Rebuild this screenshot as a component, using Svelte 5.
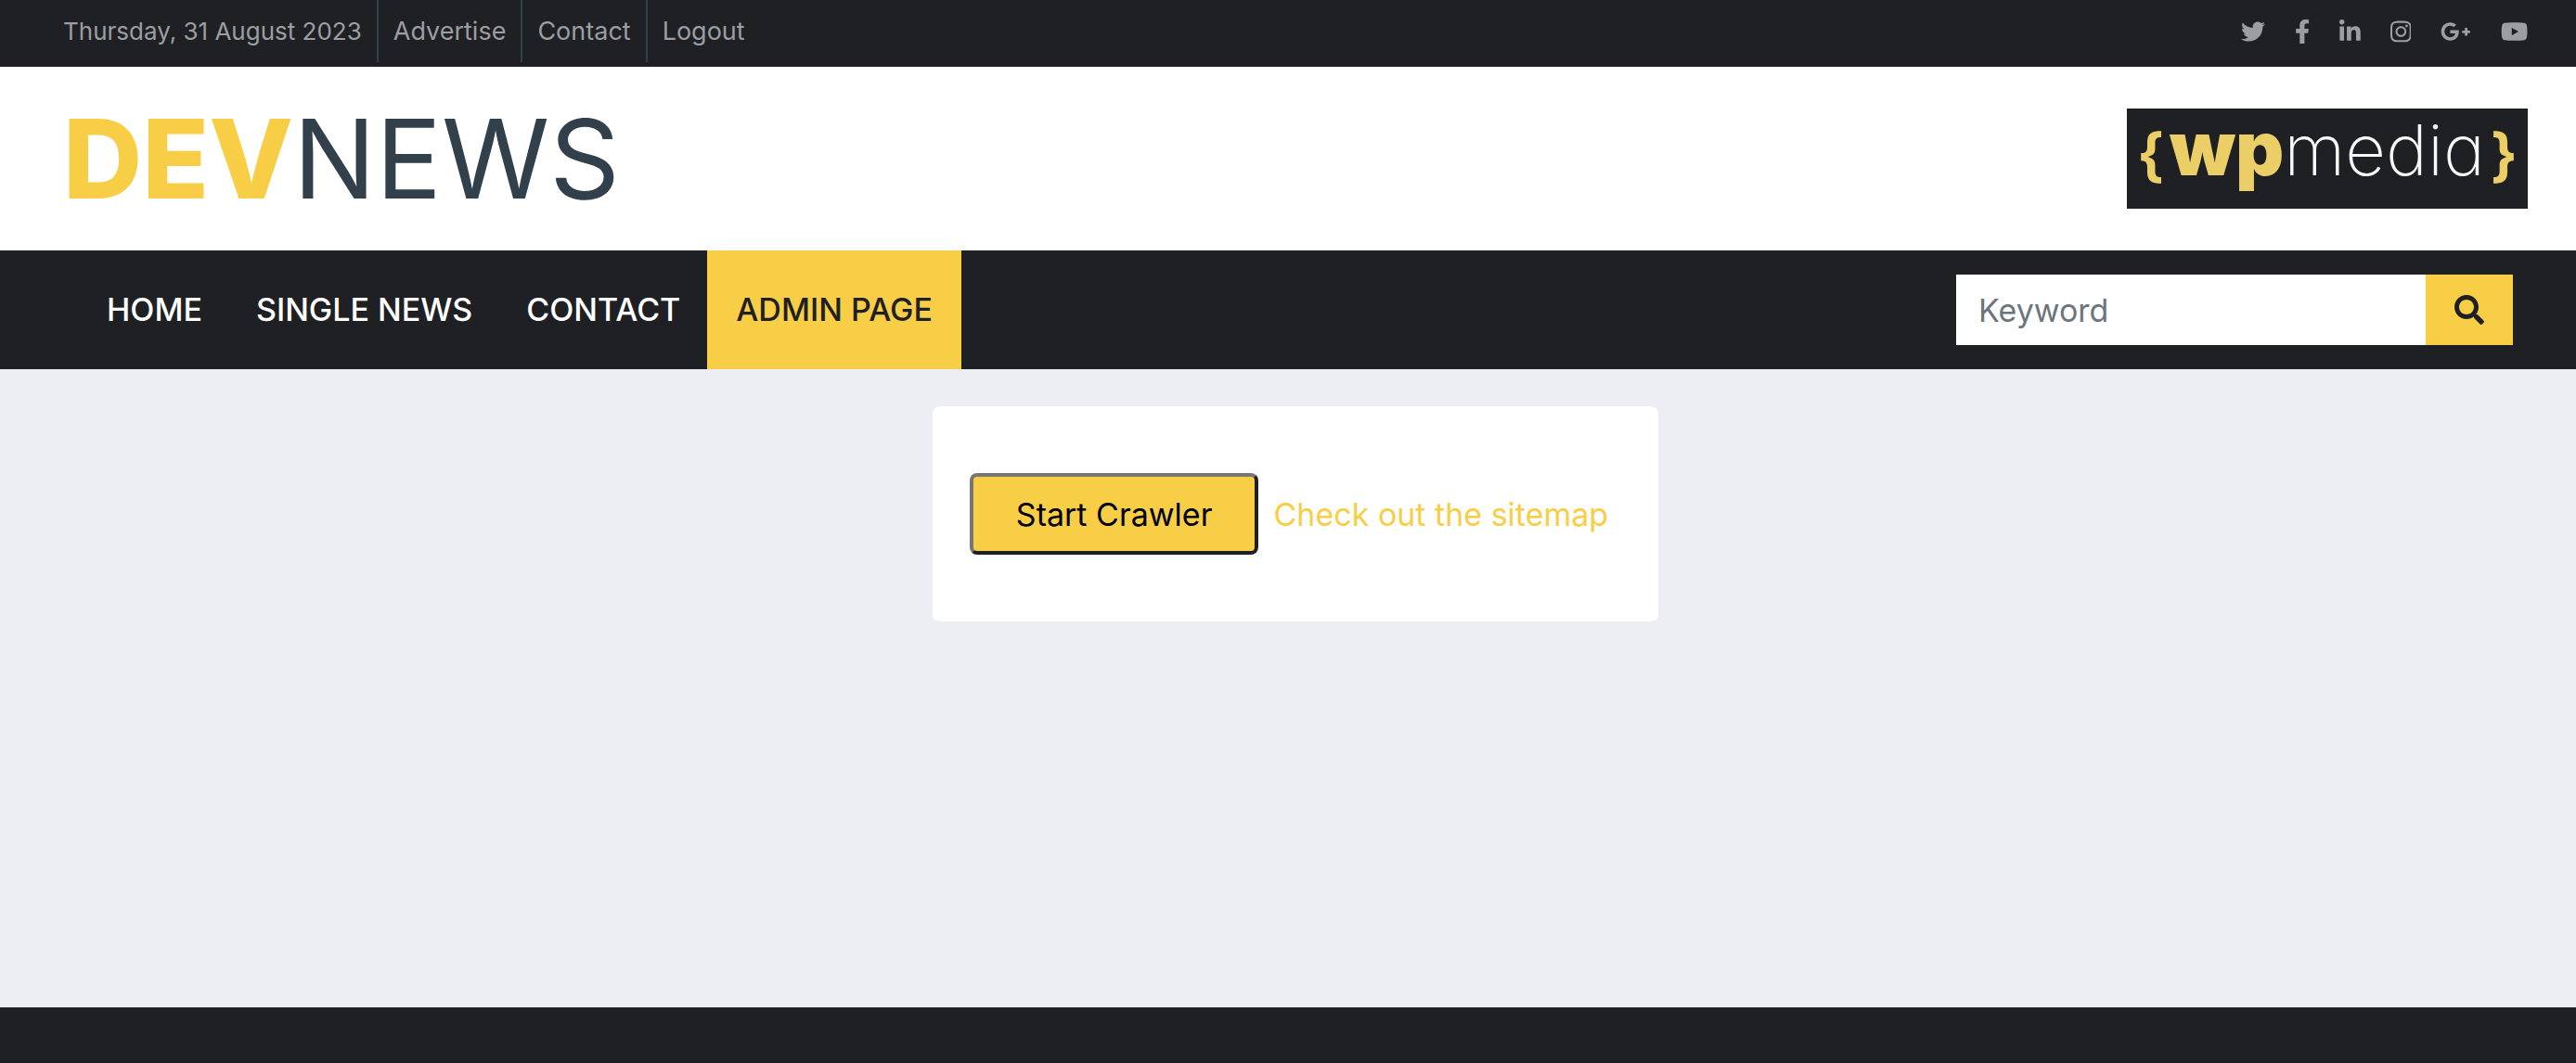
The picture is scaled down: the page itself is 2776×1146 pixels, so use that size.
<script>
  const topLinks = ['Advertise', 'Contact', 'Logout'];
  const menu = [
    { label: 'HOME' },
    { label: 'SINGLE NEWS' },
    { label: 'CONTACT' },
    { label: 'ADMIN PAGE', active: true }
  ];
  const social = [
    {
      name: 'Twitter',
      w: 512,
      d: 'M459.37 151.716c.325 4.548.325 9.097.325 13.645 0 138.72-105.583 298.558-298.558 298.558-59.452 0-114.68-17.219-161.137-47.106 8.447.974 16.568 1.299 25.34 1.299 49.055 0 94.213-16.568 130.274-44.832-46.132-.975-84.792-31.188-98.112-72.772 6.498.974 12.995 1.624 19.818 1.624 9.421 0 18.843-1.3 27.614-3.573-48.081-9.747-84.143-51.98-84.143-102.985v-1.299c13.969 7.797 30.214 12.67 47.431 13.319-28.264-18.843-46.781-51.005-46.781-87.391 0-19.492 5.197-37.36 14.294-52.954 51.655 63.675 129.3 105.258 216.365 109.807-1.624-7.797-2.599-15.918-2.599-24.04 0-57.828 46.782-104.934 104.934-104.934 30.213 0 57.502 12.67 76.67 33.137 23.715-4.548 46.456-13.32 66.599-25.34-7.798 24.366-24.366 44.833-46.132 57.827 21.117-2.273 41.584-8.122 60.426-16.243-14.292 20.791-32.161 39.308-52.628 54.253z'
    },
    {
      name: 'Facebook',
      w: 320,
      d: 'M279.14 288l14.22-92.66h-88.91v-60.13c0-25.35 12.42-50.06 52.24-50.06h40.42V6.26S260.43 0 225.36 0c-73.22 0-121.08 44.38-121.08 124.72v70.62H22.89V288h81.39v224h100.17V288z'
    },
    {
      name: 'LinkedIn',
      w: 448,
      d: 'M100.28 448H7.4V148.9h92.88zM53.79 108.1C24.09 108.1 0 83.5 0 53.8a53.79 53.79 0 0 1 107.58 0c0 29.7-24.1 54.3-53.79 54.3zM447.9 448h-92.68V302.4c0-34.7-.7-79.2-48.29-79.2-48.29 0-55.69 37.7-55.69 76.7V448h-92.78V148.9h89.08v40.8h1.3c12.4-23.5 42.69-48.3 87.88-48.3 94 0 111.28 61.9 111.28 142.3V448z'
    },
    {
      name: 'Instagram',
      w: 448,
      d: 'M224.1 141c-63.6 0-114.9 51.3-114.9 114.9s51.3 114.9 114.9 114.9S339 319.5 339 255.9 287.7 141 224.1 141zm0 189.6c-41.1 0-74.7-33.5-74.7-74.7s33.5-74.7 74.7-74.7 74.7 33.5 74.7 74.7-33.6 74.7-74.7 74.7zm146.4-194.3c0 14.9-12 26.8-26.8 26.8-14.9 0-26.8-12-26.8-26.8s12-26.8 26.8-26.8 26.8 12 26.8 26.8zm76.1 27.2c-1.7-35.9-9.9-67.7-36.2-93.9-26.2-26.2-58-34.4-93.9-36.2-37-2.1-147.9-2.1-184.9 0-35.8 1.7-67.6 9.9-93.9 36.1s-34.4 58-36.2 93.9c-2.1 37-2.1 147.9 0 184.9 1.7 35.9 9.9 67.7 36.2 93.9s58 34.4 93.9 36.2c37 2.1 147.9 2.1 184.9 0 35.9-1.7 67.7-9.9 93.9-36.2 26.2-26.2 34.4-58 36.2-93.9 2.1-37 2.1-147.8 0-184.8zM398.8 388c-7.8 19.6-22.9 34.7-42.6 42.6-29.5 11.7-99.5 9-132.1 9s-102.7 2.6-132.1-9c-19.6-7.8-34.7-22.9-42.6-42.6-11.7-29.5-9-99.5-9-132.1s-2.6-102.7 9-132.1c7.8-19.6 22.9-34.7 42.6-42.6 29.5-11.7 99.5-9 132.1-9s102.7-2.6 132.1 9c19.6 7.8 34.7 22.9 42.6 42.6 11.7 29.5 9 99.5 9 132.1s2.7 102.7-9 132.1z'
    },
    {
      name: 'Google Plus',
      w: 640,
      d: 'M386.061 228.496c1.834 9.692 3.143 19.384 3.143 31.956C389.204 370.205 315.599 448 204.8 448c-106.084 0-192-85.915-192-192s85.916-192 192-192c51.864 0 95.083 18.859 128.611 50.292l-52.126 50.03c-14.145-13.621-39.028-29.599-76.485-29.599-65.484 0-118.92 54.221-118.92 121.277 0 67.056 53.436 121.277 118.92 121.277 75.961 0 104.513-54.745 108.965-82.773H204.8v-66.009h181.261zm185.406 6.437V179.2h-56.001v55.733h-55.733v56.001h55.733v55.733h56.001v-55.733H627.2v-56.001h-55.733z'
    },
    {
      name: 'YouTube',
      w: 576,
      d: 'M549.655 124.083c-6.281-23.65-24.787-42.276-48.284-48.597C458.781 64 288 64 288 64S117.22 64 74.629 75.486c-23.497 6.322-42.003 24.947-48.284 48.597-11.412 42.867-11.412 132.305-11.412 132.305s0 89.438 11.412 132.305c6.281 23.65 24.787 41.5 48.284 47.821C117.22 448 288 448 288 448s170.78 0 213.371-11.486c23.497-6.321 42.003-24.171 48.284-47.821 11.412-42.867 11.412-132.305 11.412-132.305s0-89.438-11.412-132.305zm-317.51 213.508V175.185l142.739 81.205-142.739 81.201z'
    }
  ];
  let keyword = $state('');
</script>

<div class="page">
  <div class="topbar">
    <ul class="toplinks">
      <li>Thursday, 31 August 2023</li>
      {#each topLinks as label}
        <li><a href="#top">{label}</a></li>
      {/each}
    </ul>
    <div class="social">
      {#each social as icon}
        <a href="#social" aria-label={icon.name}>
          <svg viewBox="0 0 {icon.w} 512" aria-hidden="true"><path d={icon.d} /></svg>
        </a>
      {/each}
    </div>
  </div>

  <header class="brandbar">
    <a class="brand" href="#home"><b>DEV</b><span>NEWS</span></a>
    <a class="ad" href="#wpmedia">
      <span class="brace">&#123;</span><span class="wp">wp</span><span class="media">media</span><span class="brace">&#125;</span>
    </a>
  </header>

  <nav class="navbar">
    <div class="menu">
      {#each menu as item}
        <a href="#menu" class:active={item.active}>{item.label}</a>
      {/each}
    </div>
    <form class="search" onsubmit={(e) => e.preventDefault()}>
      <input type="text" placeholder="Keyword" aria-label="Keyword" bind:value={keyword} />
      <button type="submit" aria-label="Search">
        <svg viewBox="0 0 512 512" aria-hidden="true"><path d="M505 442.7L405.3 343c-4.5-4.5-10.6-7-17-7H372c27.6-35.3 44-79.7 44-128C416 93.1 322.9 0 208 0S0 93.1 0 208s93.1 208 208 208c48.3 0 92.7-16.4 128-44v16.3c0 6.4 2.5 12.5 7 17l99.7 99.7c9.4 9.4 24.6 9.4 33.9 0l28.3-28.3c9.4-9.4 9.4-24.6.1-34zM208 336c-70.7 0-128-57.2-128-128 0-70.7 57.2-128 128-128 70.7 0 128 57.2 128 128 0 70.7-57.2 128-128 128z" /></svg>
      </button>
    </form>
  </nav>

  <main>
    <section class="card">
      <button class="crawl" type="button">Start Crawler</button>
      <a href="#sitemap">Check out the sitemap</a>
    </section>
  </main>

  <footer></footer>
</div>

<style>
  :global(body) {
    margin: 0;
  }
  .page {
    display: flex;
    flex-direction: column;
    min-height: 100vh;
    background: #edeef4;
    color: #1f2024;
    font-family: Inter, 'Open Sans', sans-serif;
    font-size: 34px;
  }
  a {
    color: inherit;
    text-decoration: none;
  }
  .topbar {
    display: flex;
    justify-content: space-between;
    padding: 0 52px 5px;
    background: #1f2024;
    color: #9c9ea2;
    font-size: 26px;
  }
  .toplinks {
    display: flex;
    margin: 0;
    padding: 0;
    list-style: none;
    line-height: 67px;
  }
  .toplinks li {
    height: 67px;
    padding: 0 16px;
    border-right: 2px solid #31404b;
  }
  .toplinks li:last-child {
    border-right: 0;
  }
  .toplinks a {
    font-size: 27px;
  }
  .social {
    display: flex;
    align-items: center;
    gap: 32px;
  }
  .social a {
    display: flex;
  }
  .social svg {
    height: 26px;
    fill: currentColor;
  }
  .brandbar {
    display: flex;
    align-items: center;
    justify-content: space-between;
    height: 198px;
    padding: 0 52px 0 68px;
    background: #fff;
  }
  .brand {
    color: #31404b;
    font-size: 118px;
    line-height: 132px;
  }
  .brand b {
    color: #f7ce46;
    font-weight: 800;
  }
  .ad {
    display: flex;
    align-items: baseline;
    justify-content: center;
    box-sizing: border-box;
    width: 432px;
    height: 108px;
    background: #1f2024;
    color: #ebcf66;
    line-height: 86px;
  }
  .brace {
    padding: 0 6px;
    font-size: 62px;
    font-weight: 700;
  }
  .wp {
    font-size: 81px;
    font-weight: 900;
  }
  .media {
    color: #f8f8f8;
    font-size: 76px;
    font-weight: 200;
    font-feature-settings: 'cv11';
  }
  .navbar {
    display: flex;
    align-items: center;
    justify-content: space-between;
    padding: 0 68px 0 86px;
    background: #1f2024;
  }
  .menu {
    display: flex;
    color: #fff;
    font-weight: 500;
    line-height: 128px;
  }
  .menu a {
    padding: 0 29px;
  }
  .menu .active {
    padding: 0 31px;
    background: #f7ce46;
    color: #1f2024;
  }
  .search {
    display: flex;
    width: 600px;
    height: 76px;
  }
  .search input {
    flex: 1;
    min-width: 0;
    padding: 0 24px;
    border: 0;
    background: #fff;
    color: #1f2024;
    font-family: inherit;
    font-size: 34px;
  }
  .search input::placeholder {
    color: #6c757d;
  }
  .search button {
    display: flex;
    align-items: center;
    justify-content: center;
    width: 94px;
    padding: 0;
    border: 0;
    background: #f7ce46;
  }
  .search svg {
    width: 32px;
    fill: #1f2024;
  }
  main {
    display: flex;
    flex: 1;
    align-items: flex-start;
    justify-content: center;
    padding: 40px 0 40px 16px;
  }
  .card {
    display: flex;
    align-items: center;
    gap: 16px;
    box-sizing: border-box;
    padding: 72px 54px 72px 40px;
    border-radius: 8px;
    background: #fff;
    color: #f7ce46;
  }
  .crawl {
    height: 88px;
    padding: 0 46px;
    border: 4px solid;
    border-color: #767676 #1f2024 #1f2024 #767676;
    border-radius: 8px;
    background: #f7ce46;
    color: #000;
    font-family: inherit;
    font-size: 34px;
  }
  footer {
    height: 60px;
    background: #1f2024;
  }
</style>
